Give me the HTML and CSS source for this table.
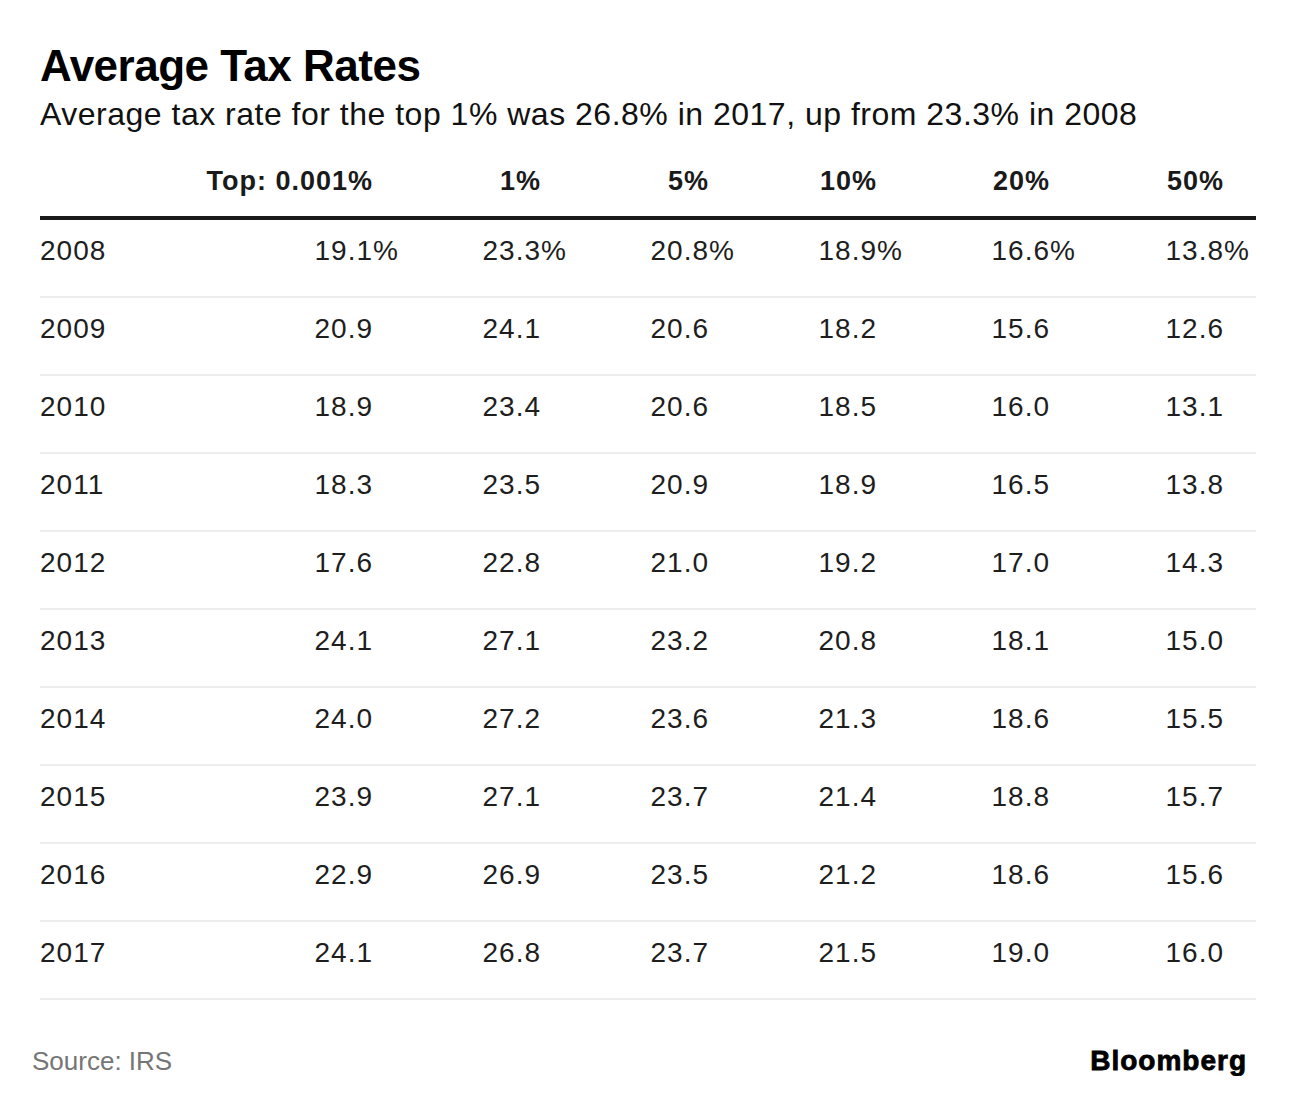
FILE: index.html
```html
<!DOCTYPE html>
<html lang="en">
<head>
<meta charset="utf-8">
<title>Average Tax Rates</title>
<link rel="stylesheet" href="styles.css">
</head>
<body>
<main class="chart">
  <h1 class="title">Average Tax Rates</h1>
  <p class="subtitle">Average tax rate for the top 1% was 26.8% in 2017, up from 23.3% in 2008</p>

  <div class="table">
    <div class="row head">
      <div class="cell year"></div>
      <div class="cell num">Top: 0.001%</div>
      <div class="cell num">1%</div>
      <div class="cell num">5%</div>
      <div class="cell num">10%</div>
      <div class="cell num">20%</div>
      <div class="cell num">50%</div>
    </div>
    <div class="row">
      <div class="cell year">2008</div>
      <div class="cell num">19.1<span class="pct">%</span></div>
      <div class="cell num">23.3<span class="pct">%</span></div>
      <div class="cell num">20.8<span class="pct">%</span></div>
      <div class="cell num">18.9<span class="pct">%</span></div>
      <div class="cell num">16.6<span class="pct">%</span></div>
      <div class="cell num">13.8<span class="pct">%</span></div>
    </div>
    <div class="row">
      <div class="cell year">2009</div>
      <div class="cell num">20.9</div><div class="cell num">24.1</div><div class="cell num">20.6</div>
      <div class="cell num">18.2</div><div class="cell num">15.6</div><div class="cell num">12.6</div>
    </div>
    <div class="row">
      <div class="cell year">2010</div>
      <div class="cell num">18.9</div><div class="cell num">23.4</div><div class="cell num">20.6</div>
      <div class="cell num">18.5</div><div class="cell num">16.0</div><div class="cell num">13.1</div>
    </div>
    <div class="row">
      <div class="cell year">2011</div>
      <div class="cell num">18.3</div><div class="cell num">23.5</div><div class="cell num">20.9</div>
      <div class="cell num">18.9</div><div class="cell num">16.5</div><div class="cell num">13.8</div>
    </div>
    <div class="row">
      <div class="cell year">2012</div>
      <div class="cell num">17.6</div><div class="cell num">22.8</div><div class="cell num">21.0</div>
      <div class="cell num">19.2</div><div class="cell num">17.0</div><div class="cell num">14.3</div>
    </div>
    <div class="row">
      <div class="cell year">2013</div>
      <div class="cell num">24.1</div><div class="cell num">27.1</div><div class="cell num">23.2</div>
      <div class="cell num">20.8</div><div class="cell num">18.1</div><div class="cell num">15.0</div>
    </div>
    <div class="row">
      <div class="cell year">2014</div>
      <div class="cell num">24.0</div><div class="cell num">27.2</div><div class="cell num">23.6</div>
      <div class="cell num">21.3</div><div class="cell num">18.6</div><div class="cell num">15.5</div>
    </div>
    <div class="row">
      <div class="cell year">2015</div>
      <div class="cell num">23.9</div><div class="cell num">27.1</div><div class="cell num">23.7</div>
      <div class="cell num">21.4</div><div class="cell num">18.8</div><div class="cell num">15.7</div>
    </div>
    <div class="row">
      <div class="cell year">2016</div>
      <div class="cell num">22.9</div><div class="cell num">26.9</div><div class="cell num">23.5</div>
      <div class="cell num">21.2</div><div class="cell num">18.6</div><div class="cell num">15.6</div>
    </div>
    <div class="row">
      <div class="cell year">2017</div>
      <div class="cell num">24.1</div><div class="cell num">26.8</div><div class="cell num">23.7</div>
      <div class="cell num">21.5</div><div class="cell num">19.0</div><div class="cell num">16.0</div>
    </div>
  </div>

  <footer class="footer">
    <span class="source">Source: IRS</span>
    <span class="logo">Bloomberg</span>
  </footer>
</main>
</body>
</html>
```

FILE: styles.css
```css
html, body {
  margin: 0;
  padding: 0;
  background: #ffffff;
}

body {
  font-family: "Liberation Sans", Arial, Helvetica, sans-serif;
  color: #1a1a1a;
}

.chart {
  width: 1216px;
  padding: 42px 0 0 40px;
}

.title {
  margin: 0;
  font-size: 44px;
  line-height: 48px;
  font-weight: 700;
  letter-spacing: -0.5px;
  color: #000;
}

.subtitle {
  margin: 5px 0 0;
  font-size: 32px;
  line-height: 38px;
  font-weight: 400;
  letter-spacing: 0.5px;
  color: #111;
}

.table {
  margin-top: 33px;
}

.row {
  display: grid;
  grid-template-columns: 164px 168px 168px 168px 168px 173px 174px;
  padding-right: 33px;
  padding-top: 16px;
  padding-bottom: 30px;
  border-bottom: 2px solid #ececec;
  font-size: 28px;
  line-height: 30px;
  letter-spacing: 1px;
  color: #1e1e1e;
}

.row.head {
  padding-top: 0;
  padding-bottom: 20px;
  border-bottom: 4px solid #1a1a1a;
  font-size: 27px;
  font-weight: 700;
  letter-spacing: 1px;
  color: #1a1a1a;
}

.cell {
  white-space: nowrap;
}

.num {
  text-align: right;
  margin-right: -1px;
}

.pct {
  display: inline-block;
  width: 0;
  text-align: left;
  letter-spacing: 0;
}

.footer {
  display: flex;
  justify-content: space-between;
  align-items: baseline;
  margin-top: 46px;
  margin-left: -8px;
  padding-right: 10px;
}

.source {
  font-size: 26px;
  line-height: 30px;
  color: #767676;
}

.logo {
  font-size: 28px;
  line-height: 30px;
  font-weight: 700;
  letter-spacing: 1px;
  margin-right: -1px;
  -webkit-text-stroke: 0.8px #000;
  color: #000;
}
```
